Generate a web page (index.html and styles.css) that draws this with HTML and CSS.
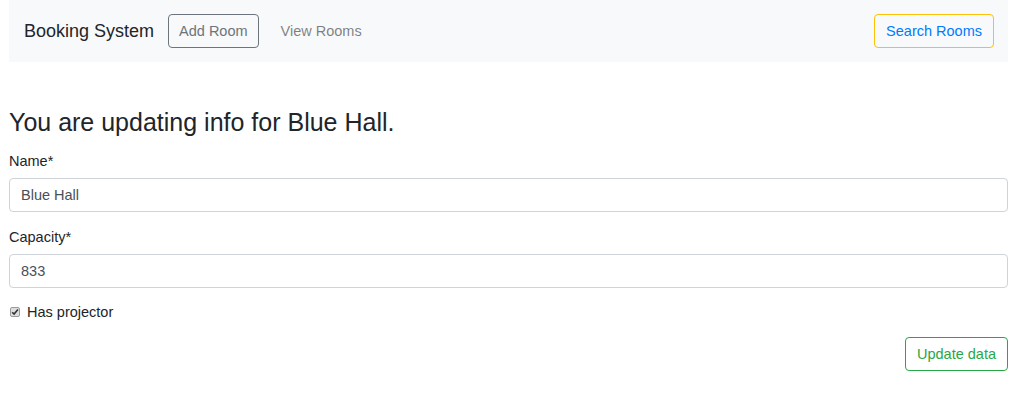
FILE: index.html
```html
<!DOCTYPE html>
<html>
<head>
<meta charset="utf-8">
<link rel="stylesheet" href="styles.css">
</head>
<body>
<div class="page">
  <nav class="navbar">
    <div class="nav-left">
      <span class="brand">Booking System</span>
      <button class="btn btn-outline-secondary">Add Room</button>
      <a class="nav-link">View Rooms</a>
    </div>
    <button class="btn btn-outline-warning">Search Rooms</button>
  </nav>
  <h3 class="title">You are updating info for Blue Hall.</h3>
  <form class="form">
    <div class="form-group">
      <label class="label">Name*</label>
      <input class="form-control" type="text" value="Blue Hall">
    </div>
    <div class="form-group">
      <label class="label">Capacity*</label>
      <input class="form-control" type="text" value="833">
    </div>
    <label class="check">
      <svg class="check-box" width="10" height="10" viewBox="0 0 10 10">
        <rect x="0.5" y="0.5" width="9" height="9" rx="1.5" fill="#dedede" stroke="#9a9a9a"/>
        <path d="M2.2 5.2 L4.1 7.1 L7.9 2.6" fill="none" stroke="#333" stroke-width="1.6"/>
      </svg>
      <span class="check-label">Has projector</span>
    </label>
    <div class="actions">
      <button type="button" class="btn btn-outline-success">Update data</button>
    </div>
  </form>
</div>
</body>
</html>
```
FILE: styles.css
```css
* { box-sizing: border-box; }
body {
  margin: 0;
  font-family: "Liberation Sans", Arial, sans-serif;
  font-size: 14.5px;
  line-height: 20px;
  color: #212529;
  background: #fff;
}
.page {
  width: 999px;
  margin-left: 9px;
}
.navbar {
  display: flex;
  align-items: center;
  justify-content: space-between;
  height: 62px;
  padding: 0 14px 0 15px;
  background: #f8f9fa;
}
.nav-left {
  display: flex;
  align-items: center;
}
.brand {
  font-size: 18px;
  line-height: 24px;
  color: #212529;
  margin-right: 14px;
}
.btn {
  font-family: inherit;
  font-size: 14.5px;
  line-height: 20px;
  height: 34px;
  padding: 6px 11px;
  background: transparent;
  border: 1px solid;
  border-radius: 4px;
  cursor: pointer;
}
.btn-outline-secondary { color: #6c757d; border-color: #6c757d; padding: 6px 10px; }
.btn-outline-warning { color: #007bff; border-color: #ffc107; }
.btn-outline-success { color: #28a745; border-color: #28a745; }
.nav-link {
  color: rgba(0,0,0,.5);
  padding: 0 0 0 22px;
}
.title {
  font-size: 25px;
  font-weight: 400;
  line-height: 28px;
  margin: 46px 0 15px;
}
.form-group { margin-bottom: 15px; }
.label {
  display: block;
  margin-bottom: 7px;
}
.form-control {
  display: block;
  width: 100%;
  height: 34px;
  padding: 6px 11px;
  font-family: inherit;
  font-size: 14.5px;
  color: #495057;
  border: 1px solid #ced4da;
  border-radius: 4px;
  background: #fff;
}
.check {
  display: flex;
  align-items: center;
  height: 20px;
  margin-top: -1px;
}
.check-box {
  margin: 0 7px 0 1px;
  flex: none;
}
.check-label { color: #212529; }
.actions {
  display: flex;
  justify-content: flex-end;
  margin-top: 15px;
}
```
